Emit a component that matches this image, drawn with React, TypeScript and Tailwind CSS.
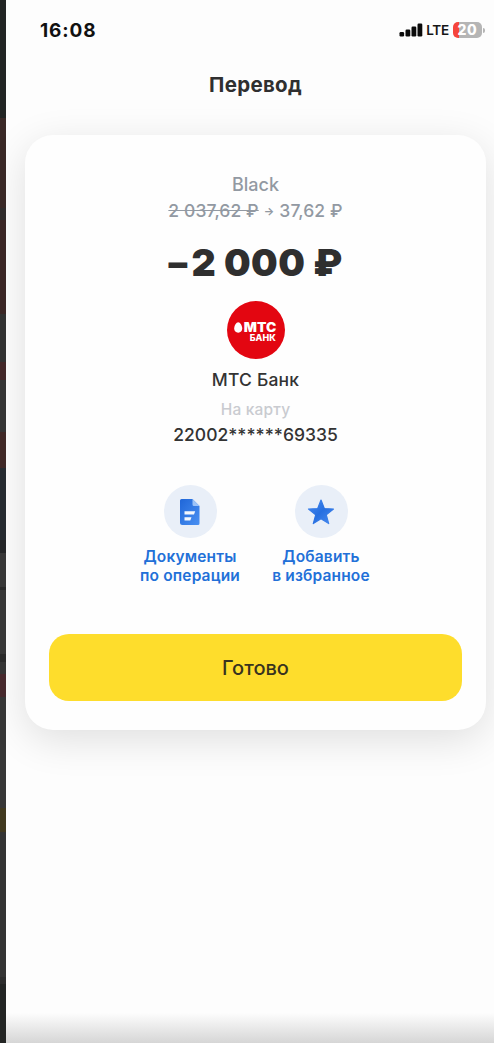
import type { ReactNode } from "react";

interface ActionProps {
  icon: ReactNode;
  lines: string[];
}

// Slices of the dimmed screen that shows behind the sheet
const backdrop = [
  { color: "bg-[#222524]", height: 118 },
  { color: "bg-[#3a2927]", height: 90 },
  { color: "bg-[#302d2d]", height: 12 },
  { color: "bg-[#3b2726]", height: 94 },
  { color: "bg-[#323232]", height: 48 },
  { color: "bg-[#442829]", height: 18 },
  { color: "bg-[#353535]", height: 52 },
  { color: "bg-[#412927]", height: 36 },
  { color: "bg-[#272c31]", height: 72 },
  { color: "bg-[#252628]", height: 13 },
  { color: "bg-[#383838]", height: 34 },
  { color: "bg-[#2a2a2a]", height: 3 },
  { color: "bg-[#383838]", height: 64 },
  { color: "bg-[#2b2b2b]", height: 8 },
  { color: "bg-[#363636]", height: 12 },
  { color: "bg-[#482a2e]", height: 23 },
  { color: "bg-[#373737]", height: 111 },
  { color: "bg-[#41391f]", height: 24 },
  { color: "bg-[#343434]", height: 145 },
  { color: "bg-[#2d2d2d]", height: 7 },
  { color: "bg-[#232524]", height: 59 },
];

function StatusBar() {
  return (
    <div className="flex h-[60px] items-center justify-between pl-[34px] pr-[9px]">
      <span className="pt-0.5 text-[19px] font-bold leading-6 tracking-[0.9px] text-[#111]">
        16:08
      </span>
      <div className="flex items-center">
        <svg width="24" height="14" viewBox="0 0 24 14" fill="#0b0b0b">
          <rect x="0.5" y="9" width="4.6" height="4.5" rx="1.2" />
          <rect x="6.5" y="6.5" width="4.8" height="7" rx="1.2" />
          <rect x="12.5" y="3.5" width="4.8" height="10" rx="1.2" />
          <rect x="18.5" y="0.5" width="4.8" height="13" rx="1.2" />
        </svg>
        <span className="ml-[3px] text-[13.5px] font-semibold leading-4 tracking-[-0.2px] text-[#161616]">
          LTE
        </span>
        <div className="ml-1 flex h-4 w-[29px] items-center justify-center rounded-[5px] bg-[linear-gradient(90deg,#f5453c_6px,#b5b5b5_6px)] text-[14px] font-extrabold leading-4 tracking-[0.6px] text-white">
          20
        </div>
        <div className="ml-px h-[5px] w-[2px] rounded-r-full bg-[#b5b5b5]" />
      </div>
    </div>
  );
}

function BankLogo() {
  return (
    <svg width="58" height="58" viewBox="0 0 58 58">
      <circle cx="29" cy="29" r="29" fill="#e30611" />
      <path
        d="M11.2 21.3c1.9 0 4 3.1 4 6.3 0 2.6-1.6 4.1-4 4.1s-4-1.5-4-4.1c0-3.2 2.1-6.3 4-6.3Z"
        fill="#fff"
      />
      <text
        x="16.8"
        y="31.4"
        textLength="32.4"
        lengthAdjust="spacingAndGlyphs"
        fontSize="12.5"
        fontWeight="900"
        fill="#fff"
      >
        МТС
      </text>
      <text
        x="22.8"
        y="40.2"
        textLength="26"
        lengthAdjust="spacingAndGlyphs"
        fontSize="9"
        fontWeight="800"
        fill="#fff"
      >
        БАНК
      </text>
    </svg>
  );
}

function DocumentIcon() {
  return (
    <svg width="20" height="26" viewBox="0 0 20 26">
      <defs>
        <linearGradient id="doc" x1="0" y1="0" x2="1" y2="1">
          <stop offset="0" stopColor="#1f66d8" />
          <stop offset="1" stopColor="#4a90f2" />
        </linearGradient>
      </defs>
      <path
        d="M1.5 0h11L19.5 7v17.5a1.5 1.5 0 0 1-1.5 1.5H2.5A2.5 2.5 0 0 1 0 23.5V1.5A1.5 1.5 0 0 1 1.5 0Z"
        fill="url(#doc)"
      />
      <path d="M12.5 0 19.5 7h-5.5a1.5 1.5 0 0 1-1.5-1.5Z" fill="#9cc3f8" />
      <path d="M4.5 12.3h10.7l-1.2 3.3H4.5ZM4.5 18.2h7l-1.2 3.3H4.5Z" fill="#f3f7fd" />
    </svg>
  );
}

function StarIcon() {
  return (
    <svg width="28" height="26" viewBox="0 0 28 26">
      <defs>
        <linearGradient id="star" x1="0" y1="0" x2="1" y2="1">
          <stop offset="0.1" stopColor="#4387ee" />
          <stop offset="0.5" stopColor="#276fe0" />
          <stop offset="1" stopColor="#4a8cf0" />
        </linearGradient>
      </defs>
      <path
        d="m14 1 3.3 8.5 9.2.5-7.2 5.8 2.4 8.8L14 19.7l-7.7 4.9 2.4-8.8L1.5 10l9.2-.5Z"
        fill="url(#star)"
        stroke="url(#star)"
        strokeWidth="1.2"
        strokeLinejoin="round"
      />
    </svg>
  );
}

function Action({ icon, lines }: ActionProps) {
  return (
    <button className="flex w-[131px] flex-col items-center">
      <span className="flex h-[53px] w-[53px] items-center justify-center rounded-full bg-[#e9eff8]">
        {icon}
      </span>
      <span className="mt-[9px] flex flex-col whitespace-nowrap text-[15.5px] font-semibold leading-[19px] tracking-[0.15px] text-[#2270d8]">
        {lines.map((line) => (
          <span key={line}>{line}</span>
        ))}
      </span>
    </button>
  );
}

export default function App() {
  return (
    <div className="flex h-[1043px] w-[494px] overflow-hidden bg-[#2e2e2e] font-['Inter',sans-serif]">
      <div className="flex w-[6px] shrink-0 flex-col">
        {backdrop.map((slice, index) => (
          <div
            key={index}
            className={slice.color}
            style={{ height: slice.height }}
          />
        ))}
      </div>

      <div className="flex w-[488px] flex-col bg-[#fdfdfd]">
        <StatusBar />

        <h1 className="ml-[11px] h-[75px] pt-3 text-center text-[20.5px] font-bold leading-[26px] tracking-[0.3px] text-[#2f2f30]">
          Перевод
        </h1>

        <main className="ml-[19px] flex h-[595px] w-[461px] shrink-0 flex-col items-center rounded-[28px] bg-[#fefefe] px-6 pt-[37px] text-[#333] shadow-[0_10px_40px_rgba(0,0,0,0.12)]">
          <p className="text-[18px] font-medium leading-[26px] text-[#9299a2]">
            Black
          </p>
          <p className="flex items-center whitespace-nowrap text-[17.5px] font-medium leading-[26px] tracking-[0.1px] text-[#9299a2]">
            <span className="line-through">2 037,62 ₽</span>
            <span className="mx-[5px] text-[11px] font-bold">→</span>
            <span>37,62 ₽</span>
          </p>
          <p className="mt-[15px] whitespace-nowrap text-[37.5px] font-black leading-[48px] tracking-[0.4px] text-[#2f2f2f]">
            <span className="mr-1">–</span>2 000 ₽
          </p>

          <div className="mt-[14px]">
            <BankLogo />
          </div>
          <h2 className="mt-2 text-[17.5px] font-medium leading-[26px] tracking-[0.2px]">
            МТС Банк
          </h2>
          <p className="mt-1 text-[15.5px] font-medium leading-[26px] tracking-[0.2px] text-[#c9cbd0]">
            На карту
          </p>
          <p className="text-[17.5px] font-medium leading-[24px]">
            22002******69335
          </p>

          <div className="mt-[38px] flex">
            <Action icon={<DocumentIcon />} lines={["Документы", "по операции"]} />
            <Action icon={<StarIcon />} lines={["Добавить", "в избранное"]} />
          </div>

          <button className="mt-[49px] h-[67px] w-[413px] shrink-0 rounded-[20px] bg-[#fedd2c] text-[20px] font-medium text-[#38331f]">
            Готово
          </button>
        </main>

        <div className="mt-auto h-[30px] shrink-0 bg-linear-to-b from-[#fdfdfd] to-[#d6d6d6]" />
      </div>
    </div>
  );
}
